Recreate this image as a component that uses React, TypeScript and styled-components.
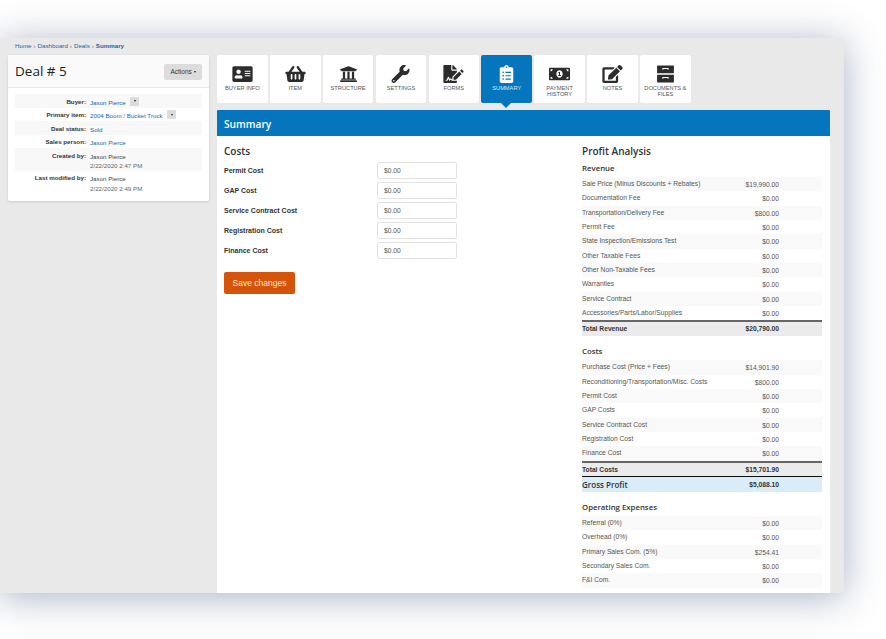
import styled, { createGlobalStyle } from "styled-components";
import {
  FaAddressCard,
  FaShoppingBasket,
  FaUniversity,
  FaWrench,
  FaFileSignature,
  FaClipboardList,
  FaMoneyBillAlt,
  FaEdit,
} from "react-icons/fa";
import type { ReactNode } from "react";

const GlobalStyle = createGlobalStyle`
  html, body {
    margin: 0;
    padding: 0;
    background: #fff;
  }
  body {
    font-family: "Liberation Sans", Arial, sans-serif;
    font-size: 7px;
    color: #333;
  }
`;

const Stage = styled.div`
  width: 886px;
  height: 639px;
  padding-top: 38px;
  box-sizing: border-box;
  overflow: hidden;
`;

const AppWindow = styled.div`
  width: 844px;
  height: 555px;
  box-sizing: border-box;
  padding: 4px 14px 0 8px;
  background: #e9e9e9;
  overflow: hidden;
  border-radius: 0 3px 3px 0;
  box-shadow: 0 4px 38px rgba(60, 80, 125, 0.45);
`;

const Crumbs = styled.div`
  height: 13px;
  padding-left: 7px;
  line-height: 8px;
  font-size: 6.2px;
  color: #777;
  display: flex;
  gap: 2px;
`;

const Crumb = styled.a<{ $current?: boolean }>`
  color: #1a65ad;
  font-weight: ${(p) => (p.$current ? 700 : 400)};
`;

const Columns = styled.div`
  display: flex;
  gap: 8px;
  align-items: flex-start;
`;

const SideCard = styled.aside`
  width: 201px;
  flex: none;
  height: 146px;
  box-sizing: border-box;
  background: #fff;
  border-radius: 2px;
  box-shadow: 0 1px 3px rgba(0, 0, 0, 0.12);
`;

const SideHead = styled.div`
  height: 33px;
  box-sizing: border-box;
  padding: 0 7px;
  display: flex;
  align-items: center;
  justify-content: space-between;
  background: #fafafa;
  border-bottom: 1px solid #e8e8e8;
`;

const DealTitle = styled.h1`
  margin: 0 0 1px;
  font-family: "Open Sans", sans-serif;
  font-size: 13.5px;
  font-weight: 500;
  color: #222;
`;

const ActionsButton = styled.button`
  width: 38px;
  height: 16px;
  padding: 0;
  border: 0;
  border-radius: 2px;
  background: #dcdcdc;
  color: #333;
  font: 6.5px "Liberation Sans", Arial, sans-serif;
  margin-top: 1px;
`;

const DetailList = styled.div`
  padding: 6px 7px 0;
`;

const DetailRow = styled.div<{ $tall?: boolean }>`
  display: grid;
  grid-template-columns: 71px 1fr;
  column-gap: 4px;
  min-height: ${(p) => (p.$tall ? "22.5px" : "13.6px")};
  padding-top: 3.5px;
  box-sizing: border-box;
  line-height: 8px;
  font-size: 6.2px;
  &:nth-child(odd) {
    background: #f8f8f8;
  }
`;

const DetailLabel = styled.div`
  text-align: right;
  font-weight: 700;
  color: #333;
`;

const DetailValue = styled.div`
  display: flex;
  flex-wrap: wrap;
  gap: 0 4.5px;
  color: #444;
  font-size: 6.2px;
  line-height: 9px;
`;

const DetailLink = styled.a`
  color: #1a65ad;
`;

const Muted = styled.div`
  flex-basis: 100%;
  color: #666;
`;

const CaretButton = styled.span`
  width: 9px;
  height: 9px;
  margin-top: -1px;
  border-radius: 1px;
  background: #dcdcdc;
  display: flex;
  align-items: center;
  justify-content: center;
`;

const Caret = styled.i`
  display: inline-block;
  border-left: 1.5px solid transparent;
  border-right: 1.5px solid transparent;
  border-top: 2px solid #222;
  vertical-align: middle;
`;

const Main = styled.main`
  width: 613px;
  flex: none;
`;

const TabBar = styled.nav`
  display: flex;
  gap: 2.2px;
  height: 55px;
`;

const Tab = styled.div<{ $active?: boolean }>`
  position: relative;
  width: 50.7px;
  height: 48px;
  box-sizing: border-box;
  padding-top: 10px;
  border-radius: 2px;
  text-align: center;
  background: ${(p) => (p.$active ? "#0576bd" : "#fff")};
  color: ${(p) => (p.$active ? "#cfe8f8" : "#555")};
  font-size: 5.7px;
  line-height: 5.7px;
  text-transform: uppercase;
  svg {
    display: block;
    margin: 0 auto 3px;
    width: 21px;
    height: 18px;
    color: ${(p) => (p.$active ? "#fff" : "#2c2c2c")};
  }
  ${(p) =>
    p.$active &&
    `&::after {
      content: "";
      position: absolute;
      left: 20px;
      bottom: -5px;
      border-left: 5px solid transparent;
      border-right: 5px solid transparent;
      border-top: 5px solid #0576bd;
    }`}
`;

const Panel = styled.section`
  background: #fff;
`;

const PanelHead = styled.h2`
  margin: 0;
  height: 26px;
  padding-left: 7px;
  background: #0576bd;
  color: #fff;
  font-family: "Open Sans", sans-serif;
  font-size: 10.2px;
  font-weight: 600;
  line-height: 28px;
  border-radius: 1px 1px 0 0;
`;

const PanelBody = styled.div`
  display: flex;
  padding: 8px 8px 0 7px;
`;

const CostsColumn = styled.div`
  width: 358px;
  flex: none;
`;

const AnalysisColumn = styled.div`
  width: 240px;
  flex: none;
`;

const SectionTitle = styled.h3`
  margin: 0 0 2px;
  height: 14px;
  font-family: "Open Sans", sans-serif;
  font-size: 10px;
  font-weight: 600;
  line-height: 14px;
  color: #333;
`;

const FieldRow = styled.div`
  display: flex;
  align-items: center;
  justify-content: space-between;
  width: 233px;
  height: 20px;
  font-size: 7px;
  font-weight: 700;
  color: #333;
`;

const FieldInput = styled.input`
  width: 80px;
  height: 17px;
  box-sizing: border-box;
  padding: 0 6px;
  border: 1px solid #e2e2e2;
  border-radius: 2px;
  background: #fff;
  color: #555;
  font: 6.7px "Liberation Sans", Arial, sans-serif;
`;

const SaveButton = styled.button`
  display: block;
  width: 71px;
  height: 22px;
  margin-top: 12px;
  padding: 0;
  border: 0;
  border-radius: 2px;
  background: #d5540a;
  color: #fbe6d8;
  font: 8.5px "Liberation Sans", Arial, sans-serif;
`;

const GroupTitle = styled.h4`
  margin: 0;
  height: 16px;
  font-family: "Open Sans", sans-serif;
  font-size: 7.8px;
  font-weight: 600;
  line-height: 16px;
  color: #333;
`;

const Group = styled.div`
  margin-bottom: 7.5px;
`;

const Rows = styled.div`
  margin-top: 1px;
`;

const Row = styled.div`
  display: flex;
  justify-content: space-between;
  height: 14.33px;
  padding-right: 43px;
  line-height: 14px;
  font-size: 6.7px;
  color: #555;
  &:nth-child(odd) {
    background: #f9f9f9;
  }
`;

const RowValue = styled.span`
  padding-top: 1px;
`;

const TotalRow = styled.div`
  display: flex;
  justify-content: space-between;
  height: 15.5px;
  box-sizing: border-box;
  padding-right: 43px;
  border-top: 2px solid #666;
  background: #ebebeb;
  font-size: 6.7px;
  font-weight: 700;
  line-height: 13px;
  color: #333;
`;

const ProfitRow = styled.div`
  display: flex;
  justify-content: space-between;
  align-items: center;
  height: 15.5px;
  box-sizing: border-box;
  padding-right: 43px;
  border-top: 1.5px solid #111;
  background: #d9edf8;
  font-size: 6.7px;
  font-weight: 700;
  color: #333;
`;

const ProfitLabel = styled.span`
  font-family: "Open Sans", sans-serif;
  font-size: 8px;
  font-weight: 600;
`;

function DrawerIcon() {
  return (
    <svg viewBox="0 0 20 16" fill="currentColor">
      <path d="M2 0h16v7.4H2z" />
      <path d="M2 8.6h16V16H2z" />
      <path
        d="M7.5 4V2.8h5V4M7.5 12.6v-1.2h5v1.2"
        fill="none"
        stroke="#fff"
        strokeWidth="1"
      />
    </svg>
  );
}

const tabs: { label: ReactNode; icon: ReactNode; active?: boolean }[] = [
  { label: "Buyer info", icon: <FaAddressCard /> },
  { label: "Item", icon: <FaShoppingBasket /> },
  { label: "Structure", icon: <FaUniversity /> },
  { label: "Settings", icon: <FaWrench /> },
  { label: "Forms", icon: <FaFileSignature /> },
  { label: "Summary", icon: <FaClipboardList />, active: true },
  { label: <>Payment<br />history</>, icon: <FaMoneyBillAlt /> },
  { label: "Notes", icon: <FaEdit /> },
  { label: <>Documents &amp;<br />files</>, icon: <DrawerIcon /> },
];

const costFields = [
  "Permit Cost",
  "GAP Cost",
  "Service Contract Cost",
  "Registration Cost",
  "Finance Cost",
];

const revenue: [string, string][] = [
  ["Sale Price (Minus Discounts + Rebates)", "$19,990.00"],
  ["Documentation Fee", "$0.00"],
  ["Transportation/Delivery Fee", "$800.00"],
  ["Permit Fee", "$0.00"],
  ["State Inspection/Emissions Test", "$0.00"],
  ["Other Taxable Fees", "$0.00"],
  ["Other Non-Taxable Fees", "$0.00"],
  ["Warranties", "$0.00"],
  ["Service Contract", "$0.00"],
  ["Accessories/Parts/Labor/Supplies", "$0.00"],
];

const costs: [string, string][] = [
  ["Purchase Cost (Price + Fees)", "$14,901.90"],
  ["Reconditioning/Transportation/Misc. Costs", "$800.00"],
  ["Permit Cost", "$0.00"],
  ["GAP Costs", "$0.00"],
  ["Service Contract Cost", "$0.00"],
  ["Registration Cost", "$0.00"],
  ["Finance Cost", "$0.00"],
];

const expenses: [string, string][] = [
  ["Referral (0%)", "$0.00"],
  ["Overhead (0%)", "$0.00"],
  ["Primary Sales Com. (5%)", "$254.41"],
  ["Secondary Sales Com.", "$0.00"],
  ["F&I Com.", "$0.00"],
];

function AmountRows({ rows }: { rows: [string, string][] }) {
  return (
    <Rows>
      {rows.map(([label, value]) => (
        <Row key={label}>
          <span>{label}</span>
          <RowValue>{value}</RowValue>
        </Row>
      ))}
    </Rows>
  );
}

export default function App() {
  return (
    <Stage>
      <GlobalStyle />
      <AppWindow>
        <Crumbs>
          <Crumb>Home</Crumb>›<Crumb>Dashboard</Crumb>›<Crumb>Deals</Crumb>›
          <Crumb $current>Summary</Crumb>
        </Crumbs>
        <Columns>
          <SideCard>
            <SideHead>
              <DealTitle>Deal # 5</DealTitle>
              <ActionsButton>
                Actions <Caret />
              </ActionsButton>
            </SideHead>
            <DetailList>
              <DetailRow>
                <DetailLabel>Buyer:</DetailLabel>
                <DetailValue>
                  <DetailLink>Jason Pierce</DetailLink>
                  <CaretButton><Caret /></CaretButton>
                </DetailValue>
              </DetailRow>
              <DetailRow>
                <DetailLabel>Primary item:</DetailLabel>
                <DetailValue>
                  <DetailLink>2004 Boom / Bucket Truck</DetailLink>
                  <CaretButton><Caret /></CaretButton>
                </DetailValue>
              </DetailRow>
              <DetailRow>
                <DetailLabel>Deal status:</DetailLabel>
                <DetailValue><DetailLink>Sold</DetailLink></DetailValue>
              </DetailRow>
              <DetailRow>
                <DetailLabel>Sales person:</DetailLabel>
                <DetailValue><DetailLink>Jason Pierce</DetailLink></DetailValue>
              </DetailRow>
              <DetailRow $tall>
                <DetailLabel>Created by:</DetailLabel>
                <DetailValue>
                  Jason Pierce
                  <Muted>2/22/2020 2:47 PM</Muted>
                </DetailValue>
              </DetailRow>
              <DetailRow $tall>
                <DetailLabel>Last modified by:</DetailLabel>
                <DetailValue>
                  Jason Pierce
                  <Muted>2/22/2020 2:49 PM</Muted>
                </DetailValue>
              </DetailRow>
            </DetailList>
          </SideCard>
          <Main>
            <TabBar>
              {tabs.map((tab, i) => (
                <Tab key={i} $active={tab.active}>
                  {tab.icon}
                  {tab.label}
                </Tab>
              ))}
            </TabBar>
            <Panel>
              <PanelHead>Summary</PanelHead>
              <PanelBody>
                <CostsColumn>
                  <SectionTitle>Costs</SectionTitle>
                  {costFields.map((name) => (
                    <FieldRow key={name}>
                      {name}
                      <FieldInput defaultValue="$0.00" />
                    </FieldRow>
                  ))}
                  <SaveButton>Save changes</SaveButton>
                </CostsColumn>
                <AnalysisColumn>
                  <SectionTitle>Profit Analysis</SectionTitle>
                  <Group>
                    <GroupTitle>Revenue</GroupTitle>
                    <AmountRows rows={revenue} />
                    <TotalRow>
                      <span>Total Revenue</span>
                      <span>$20,790.00</span>
                    </TotalRow>
                  </Group>
                  <Group>
                    <GroupTitle>Costs</GroupTitle>
                    <AmountRows rows={costs} />
                    <TotalRow>
                      <span>Total Costs</span>
                      <span>$15,701.90</span>
                    </TotalRow>
                    <ProfitRow>
                      <ProfitLabel>Gross Profit</ProfitLabel>
                      <span>$5,088.10</span>
                    </ProfitRow>
                  </Group>
                  <Group>
                    <GroupTitle>Operating Expenses</GroupTitle>
                    <AmountRows rows={expenses} />
                  </Group>
                </AnalysisColumn>
              </PanelBody>
            </Panel>
          </Main>
        </Columns>
      </AppWindow>
    </Stage>
  );
}
